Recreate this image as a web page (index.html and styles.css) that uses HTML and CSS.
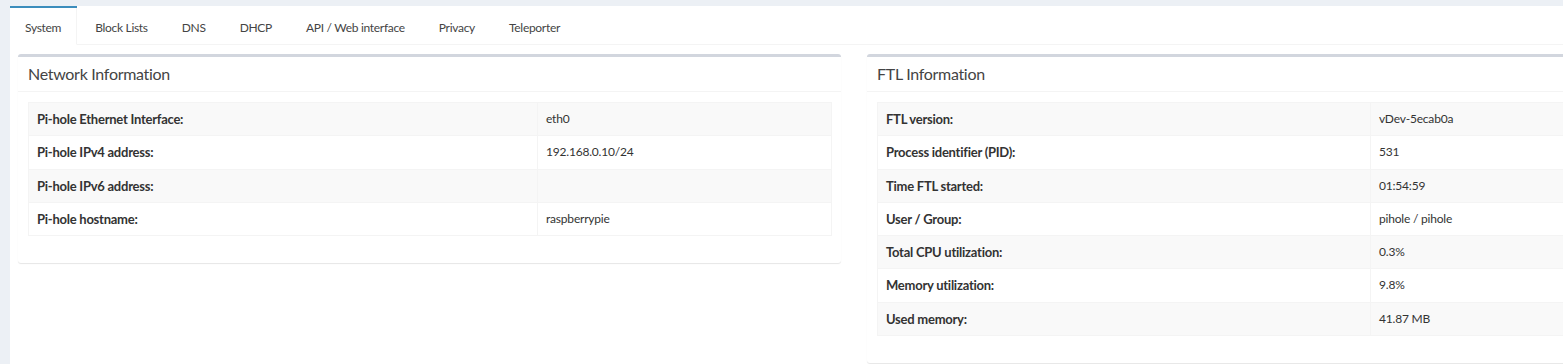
FILE: index.html
```html
<!DOCTYPE html>
<html lang="en">
<head>
  <meta charset="UTF-8">
  <title>Settings - Pi-hole</title>
  <link rel="stylesheet" href="styles.css">
</head>
<body>
  <div class="wrapper">
    <div class="nav-tabs-custom">
      <!-- onglets des parametres -->
      <ul class="nav-tabs">
        <li class="active"><a href="#">System</a></li>
        <li><a href="#">Block Lists</a></li>
        <li><a href="#">DNS</a></li>
        <li><a href="#">DHCP</a></li>
        <li><a href="#">API / Web interface</a></li>
        <li><a href="#">Privacy</a></li>
        <li><a href="#">Teleporter</a></li>
      </ul>

      <div class="tab-content">
        <div class="row">

          <div class="box">
            <div class="box-header">
              <h3 class="box-title">Network Information</h3>
            </div>
            <div class="box-body">
              <table class="info-table net">
                <tr><th>Pi-hole Ethernet Interface:</th><td>eth0</td></tr>
                <tr><th>Pi-hole IPv4 address:</th><td>192.168.0.10/24</td></tr>
                <tr><th>Pi-hole IPv6 address:</th><td></td></tr>
                <tr><th>Pi-hole hostname:</th><td>raspberrypie</td></tr>
              </table>
            </div>
          </div>

          <div class="box">
            <div class="box-header">
              <h3 class="box-title">FTL Information</h3>
            </div>
            <div class="box-body">
              <table class="info-table ftl">
                <tr><th>FTL version:</th><td>vDev-5ecab0a</td></tr>
                <tr><th>Process identifier (PID):</th><td>531</td></tr>
                <tr><th>Time FTL started:</th><td>01:54:59</td></tr>
                <tr><th>User / Group:</th><td>pihole / pihole</td></tr>
                <tr><th>Total CPU utilization:</th><td>0.3%</td></tr>
                <tr><th>Memory utilization:</th><td>9.8%</td></tr>
                <tr><th>Used memory:</th><td>41.87&nbsp;MB</td></tr>
              </table>
            </div>
          </div>

        </div>
      </div>
    </div>
  </div>
</body>
</html>
```

FILE: styles.css
```css
body {
  margin: 0;
  background-color: #ecf0f5;
  font-family: Lato, "Liberation Sans", sans-serif;
  font-size: 12px;
  color: #333;
  overflow: hidden;
}

.wrapper {
  padding: 6px 0 0 10px;
  width: 1720px;
}

.nav-tabs-custom {
  background-color: #fff;
  min-height: 400px;
}

.nav-tabs {
  display: flex;
  list-style: none;
  margin: 0;
  padding: 0;
  border-bottom: 1px solid #f4f4f4;
}

.nav-tabs li {
  margin-right: 3px;
  margin-bottom: -1px;
  border-top: 2px solid transparent;
}

.nav-tabs li a {
  display: block;
  padding: 12px 15px 9px;
  line-height: 15px;
  font-size: 12px;
  letter-spacing: -0.3px;
  color: #444;
  text-decoration: none;
  border-right: 1px solid transparent;
  border-bottom: 1px solid transparent;
}

.nav-tabs li.active {
  border-top-color: #3c8dbc;
}

.nav-tabs li.active a {
  border-right-color: #f4f4f4;
  border-bottom-color: #fff;
  background-color: #fff;
}

.tab-content {
  padding: 9px 8px;
}

.row {
  display: flex;
  gap: 26px;
  align-items: flex-start;
}

.box {
  width: 823px;
  background-color: #fff;
  border-top: 3px solid #d2d6de;
  border-radius: 3px;
  box-shadow: 0 1px 1px rgba(0, 0, 0, 0.1);
}

.box-header {
  padding: 8px 10px 9px;
  border-bottom: 1px solid #f4f4f4;
}

.box-title {
  margin: 0;
  font-size: 16px;
  font-weight: normal;
  line-height: 17px;
  letter-spacing: -0.3px;
  color: #444;
}

.box-body {
  padding: 10px 10px 10px;
}

.info-table {
  width: 804px;
  border-collapse: collapse;
  border: 1px solid #f4f4f4;
  margin-bottom: 17px;
}

.info-table th,
.info-table td {
  padding: 8px;
  line-height: 16.25px;
  border: 1px solid #f4f4f4;
  text-align: left;
  vertical-align: top;
}

.info-table th {
  font-size: 13px;
  font-weight: bold;
  letter-spacing: -0.25px;
  color: #333;
}

.info-table td {
  font-size: 12px;
  letter-spacing: -0.2px;
}

.info-table tr:nth-child(odd) {
  background-color: #f9f9f9;
}

.net th {
  width: 492px;
}

.ftl th {
  width: 476px;
}
```
